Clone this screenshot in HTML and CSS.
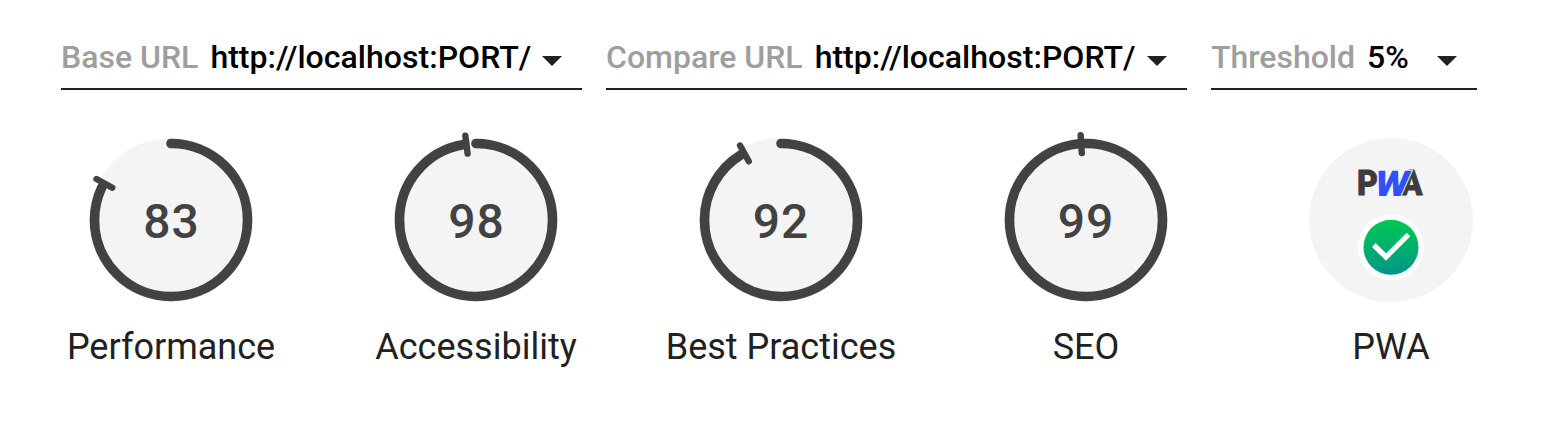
FILE: index.html
```html
<!DOCTYPE html>
<html lang="en">
<head>
<meta charset="utf-8">
<title>Score comparison</title>
<link rel="stylesheet" href="styles.css">
</head>
<body>
<header class="filters">
  <div class="filter filter-base">
    <span class="filter-label">Base URL</span>
    <span class="filter-value">http://localhost:PORT/</span>
    <svg class="caret" viewBox="0 0 20 10"><path d="M0 0h20L10 10z"/></svg>
  </div>
  <div class="filter filter-compare">
    <span class="filter-label">Compare URL</span>
    <span class="filter-value">http://localhost:PORT/</span>
    <svg class="caret" viewBox="0 0 20 10"><path d="M0 0h20L10 10z"/></svg>
  </div>
  <div class="filter filter-threshold">
    <span class="filter-label">Threshold</span>
    <span class="filter-value">5%</span>
    <svg class="caret" viewBox="0 0 20 10"><path d="M0 0h20L10 10z"/></svg>
  </div>
</header>
<main class="scores">
  <section class="score">
    <svg class="gauge" viewBox="-90 -90 180 180">
      <circle class="disc" r="82"/>
      <circle class="arc" r="76.5" pathLength="100" stroke-dasharray="82 100" transform="rotate(-90)"/>
      <path class="tick" d="M0-85V-67" transform="rotate(-61.2)"/>
      <text class="number" x="0.5" y="18">83</text>
    </svg>
    <span class="score-label">Performance</span>
  </section>
  <section class="score">
    <svg class="gauge" viewBox="-90 -90 180 180">
      <circle class="disc" r="82"/>
      <circle class="arc" r="76.5" pathLength="100" stroke-dasharray="97.2 100" transform="rotate(-90)"/>
      <path class="tick" d="M0-85V-67" transform="rotate(-7.2)"/>
      <text class="number" x="0.5" y="18">98</text>
    </svg>
    <span class="score-label">Accessibility</span>
  </section>
  <section class="score">
    <svg class="gauge" viewBox="-90 -90 180 180">
      <circle class="disc" r="82"/>
      <circle class="arc" r="76.5" pathLength="100" stroke-dasharray="91.2 100" transform="rotate(-90)"/>
      <path class="tick" d="M0-85V-67" transform="rotate(-28.8)"/>
      <text class="number" x="0" y="18">92</text>
    </svg>
    <span class="score-label">Best Practices</span>
  </section>
  <section class="score">
    <svg class="gauge" viewBox="-90 -90 180 180">
      <circle class="disc" r="82"/>
      <circle class="arc" r="76.5" transform="rotate(-90)"/>
      <path class="tick" d="M0-85V-67" transform="rotate(-3.6)"/>
      <text class="number" x="0" y="18">99</text>
    </svg>
    <span class="score-label">SEO</span>
  </section>
  <section class="score">
    <svg class="gauge" viewBox="-90 -90 180 180">
      <defs>
        <linearGradient id="pass" x1="0" y1="0" x2="0" y2="1">
          <stop offset="0" stop-color="#00c852"/>
          <stop offset="1" stop-color="#009688"/>
        </linearGradient>
      </defs>
      <circle class="disc" r="82"/>
      <g class="logo">
        <text class="logo-dark" x="-34" y="-24.7" textLength="21" lengthAdjust="spacingAndGlyphs">P</text>
        <text class="logo-dark" x="9.5" y="-24.7" textLength="22" lengthAdjust="spacingAndGlyphs">A</text>
        <text class="logo-accent" x="-15" y="-24.5" textLength="34" lengthAdjust="spacingAndGlyphs" transform="translate(-8.5 0) skewX(-12)">W</text>
      </g>
      <circle cx="0" cy="27.3" r="33" fill="#fff"/>
      <circle cx="0" cy="27.3" r="27.5" fill="url(#pass)"/>
      <path d="M-17.2 25L-5 37L17.5 14.5" fill="none" stroke="#fff" stroke-width="5.3"/>
    </svg>
    <span class="score-label">PWA</span>
  </section>
</main>
</body>
</html>
```
FILE: styles.css
```css
body {
  margin: 0;
  background: #fff;
  color: #212121;
  font-family: Roboto, sans-serif;
}

.filters {
  display: flex;
  gap: 24px;
  padding: 32px 0 0 61px;
}

.filter {
  box-sizing: border-box;
  display: flex;
  align-items: center;
  height: 58px;
  padding-bottom: 6px;
  border-bottom: 2px solid #212121;
  font-size: 32px;
  font-weight: 500;
  line-height: 48px;
  white-space: nowrap;
}

.filter-base { width: 521px; }
.filter-compare { width: 581px; }
.filter-threshold { width: 266px; }

.filter-label {
  margin-right: 12px;
  color: #9e9e9e;
}

.filter-value {
  color: #000;
  letter-spacing: 0.03px;
}

.caret {
  width: 20px;
  height: 10px;
  margin: 7px 20px 0 auto;
  fill: #212121;
}

.scores {
  display: grid;
  grid-template-columns: repeat(5, 305px);
  padding: 40px 0 0 18.5px;
}

.score {
  display: flex;
  flex-direction: column;
  align-items: center;
}

.gauge {
  width: 180px;
  height: 180px;
}

.disc {
  fill: #f4f4f4;
}

.arc {
  fill: none;
  stroke: #424242;
  stroke-width: 9.6;
  stroke-linecap: round;
}

.tick {
  stroke: #424242;
  stroke-width: 6.4;
  stroke-linecap: round;
}

.number {
  fill: #424242;
  font-size: 48px;
  font-weight: 500;
  letter-spacing: 1px;
  text-anchor: middle;
}

.logo {
  fill: #3d3d3d;
  font-size: 35.5px;
  font-weight: 900;
}

.logo-dark {
  stroke: #3d3d3d;
  stroke-width: 0.8;
}

.logo-accent {
  fill: #304ffe;
  stroke: #f4f4f4;
  stroke-width: 2;
  paint-order: stroke;
}

.score-label {
  margin-top: 16px;
  font-size: 36px;
  line-height: 42px;
}
```
